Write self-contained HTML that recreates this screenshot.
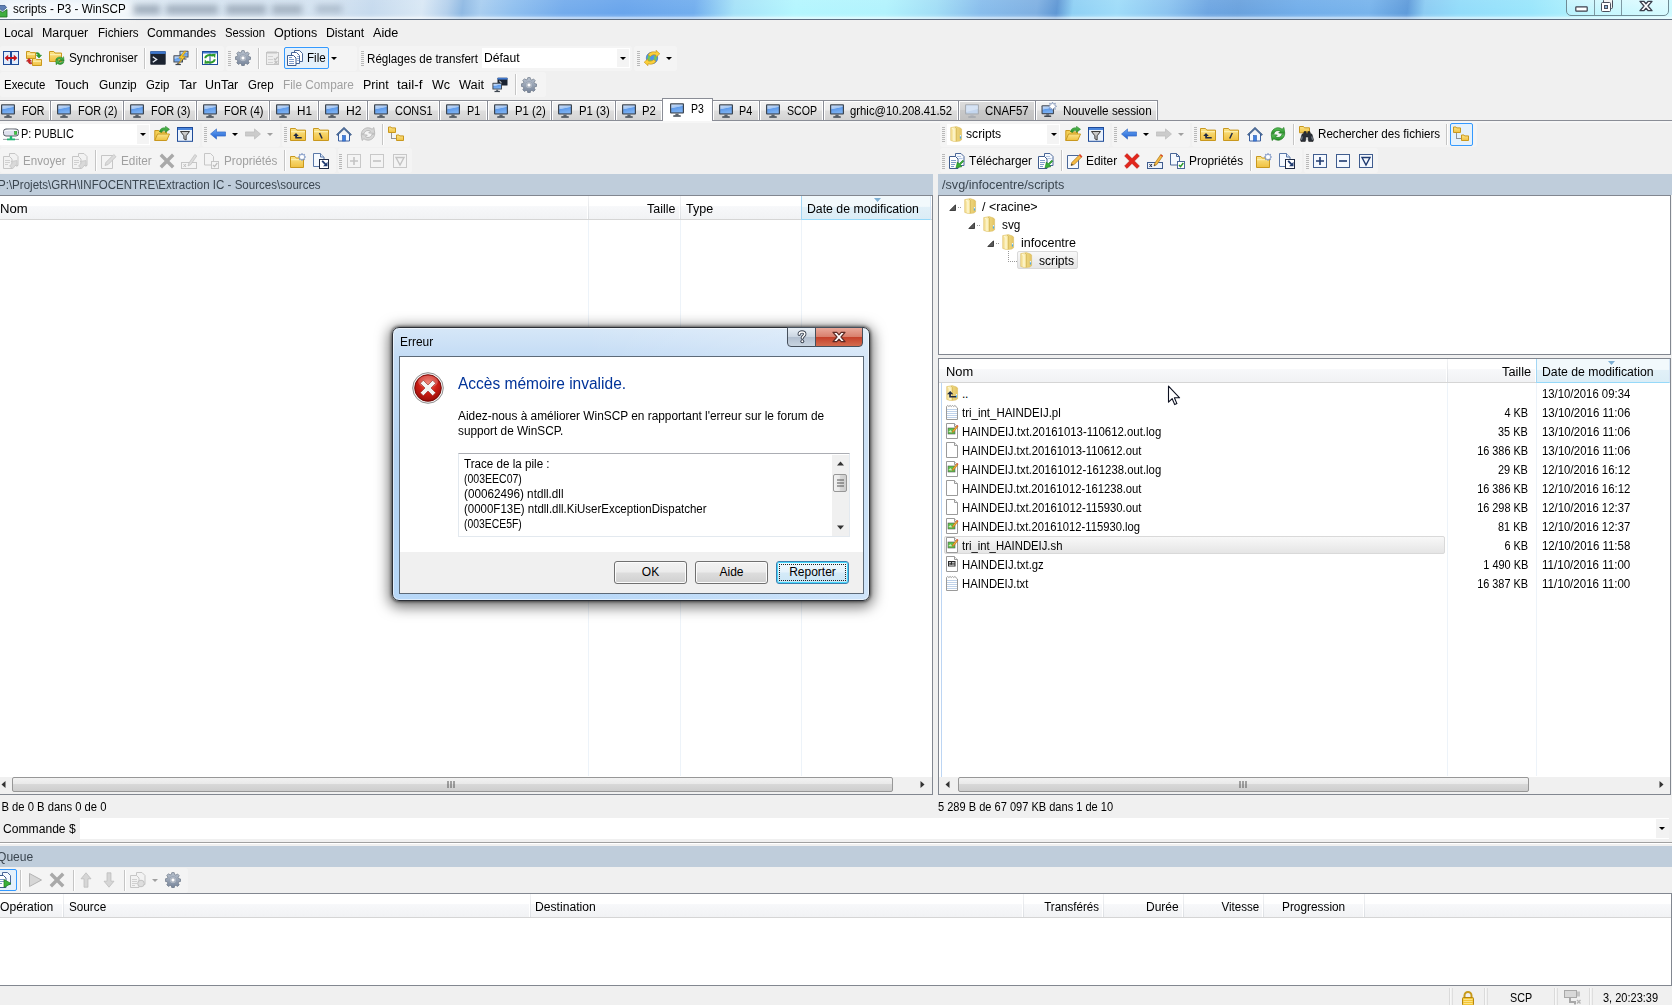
<!DOCTYPE html>
<html><head><meta charset="utf-8"><title>scripts - P3 - WinSCP</title>
<style>
*{box-sizing:border-box;margin:0;padding:0}
html,body{width:1672px;height:1005px;overflow:hidden;background:#f0f0f0}
body{font-family:"Liberation Sans",sans-serif;font-size:12px;color:#000;position:relative}
.a{position:absolute}
.t{position:absolute;white-space:pre;line-height:16px;height:16px;letter-spacing:-0.15px}
.g{color:#a0a0a0}
.ic{position:absolute;width:16px;height:16px}
.sep{position:absolute;width:1px;background:#c5c5c5;box-shadow:1px 0 0 #fff}
.grip{position:absolute;width:3px;height:15px;background:repeating-linear-gradient(to bottom,#b8b8b8 0,#b8b8b8 1px,transparent 1px,transparent 2px)}
.dd{position:absolute;width:0;height:0;border-left:3px solid transparent;border-right:3px solid transparent;border-top:3px solid #000}
.dd.g{border-top-color:#a0a0a0}
.tab{position:absolute;top:100px;height:20px;border:1px solid #8a8d96;border-bottom:none;background:linear-gradient(#f3f3f3,#ececec 48%,#dedede 52%,#d3d3d3);box-shadow:inset 1px 1px 0 #fff,inset -1px 0 0 #fff}
.tab.sel{top:98px;height:23px;background:#fff;border-color:#8a8d96;z-index:2;box-shadow:none}
.tab .t{top:2px}
.tab.sel .t{top:2px}
.hdr{position:absolute;background:#bfcddb;color:#3b4650}
.lh{position:absolute;height:24px;background:linear-gradient(#fff 0,#fff 42%,#f7f8fa 46%,#f1f2f4 100%);border-bottom:1px solid #d5d5d5}
.lh .t{top:5px}
.cs{position:absolute;top:0;width:1px;height:23px;background:linear-gradient(#f2f3f5,#dcdfe3);box-shadow:-1px 0 0 #fff}
.srt{position:absolute;top:0;height:24px;background:linear-gradient(#f2f9fc 0,#f2f9fc 45%,#e1f0f8 50%,#dbedf6 100%);border-left:1px solid #a3d6f4;border-right:1px solid #d6e5f5;border-bottom:1px solid #96d9f9}
.vl{position:absolute;width:1px;background:#edf3f9}
.sb{position:absolute;height:17px;background:#f0f0f0}
.thumb{position:absolute;top:0;height:15px;border:1px solid #979797;border-radius:2px;background:linear-gradient(#f2f2f2,#e9e9e9 45%,#d8d8d8 50%,#cdcdcd)}
.btn{position:absolute;height:23px;border:1px solid #707070;border-radius:3px;background:linear-gradient(#f2f2f2,#ebebeb 48%,#dddddd 52%,#cfcfcf);box-shadow:inset 0 0 0 1px #fcfcfc;text-align:center;line-height:20px;font-size:12px}
.fn{letter-spacing:-.45px}.fs{letter-spacing:-.5px}.fd{letter-spacing:-.3px}
.st{letter-spacing:-.4px}
</style></head>
<body>
<svg width="0" height="0" style="position:absolute"><defs>
<linearGradient id="scr" x1="0" y1="0" x2=".3" y2="1"><stop offset="0" stop-color="#cadcf6"/><stop offset=".42" stop-color="#a3c6f3"/><stop offset=".5" stop-color="#5f9bea"/><stop offset="1" stop-color="#7bb0f1"/></linearGradient>
<linearGradient id="fol" x1="0" y1="0" x2="0" y2="1"><stop offset="0" stop-color="#fbe58a"/><stop offset="1" stop-color="#f0c040"/></linearGradient>
<symbol id="mon" viewBox="0 0 16 16"><rect x="1" y="1.2" width="14" height="10.4" rx="1" fill="#3b444f"/><rect x="2.2" y="2.4" width="11.6" height="8" fill="url(#scr)"/><rect x="6.4" y="11.6" width="3.2" height="1.8" fill="#5a626c"/><rect x="4.2" y="13.2" width="7.6" height="1.5" rx=".5" fill="#3d454f"/></symbol>
<linearGradient id="gg" x1="0" y1="0" x2="0" y2="1"><stop offset="0" stop-color="#b9c2ce"/><stop offset="1" stop-color="#76849a"/></linearGradient>
<linearGradient id="bl" x1="0" y1="0" x2="0" y2="1"><stop offset="0" stop-color="#6aa7f5"/><stop offset="1" stop-color="#1f5fd0"/></linearGradient>
<linearGradient id="gr" x1="0" y1="0" x2="0" y2="1"><stop offset="0" stop-color="#62c662"/><stop offset="1" stop-color="#228b22"/></linearGradient>
<linearGradient id="w7f" x1="0" y1="0" x2="1" y2="0"><stop offset="0" stop-color="#f3dc8c"/><stop offset=".3" stop-color="#fbf0bb"/><stop offset=".55" stop-color="#eed77e"/><stop offset="1" stop-color="#e3c362"/></linearGradient>
<symbol id="cmp" viewBox="0 0 16 16"><rect x=".5" y="1.5" width="15" height="13" fill="#e3eefc" stroke="#1f4b99"/><rect x="7" y="1" width="2" height="14" fill="#1f4b99"/><path d="M1.6 8l3.6-3.2v2.2h5.6V4.8L14.4 8l-3.6 3.2V9H5.2v2.2z" fill="#c4161c"/></symbol>
<symbol id="fold" viewBox="0 0 16 16"><path d="M1.5 3.5h4.3l1.2 1.5h7.5v8.5h-13z" fill="url(#fol)" stroke="#c9981e"/><path d="M2 6.5h12" stroke="#fdf3b8"/></symbol>
<symbol id="syncf" viewBox="0 0 16 16"><path d="M.5 1.5h3.2l.9 1.1h4.9v5.9h-9z" fill="url(#fol)" stroke="#c9981e"/><path d="M6.5 8.5h3.2l.9 1.1h4.9v5.9h-9z" fill="url(#fol)" stroke="#c9981e"/><path d="M1 4.2h8M7 11.2h8" stroke="#fdf3b8"/><path d="M10.5 2.5c2.2 0 3.4 1 3.4 2.8h1.7L13 8 10.400 5.300h1.7c0-.9-.6-1.300-1.600-1.300z" fill="#2fa12f" stroke="#1c7a1c" stroke-width=".5"/><path d="M5.500 14c-2.200 0-3.400-1-3.400-2.800H.400L3 8.500l2.600 2.700H3.900c0 .9.600 1.300 1.600 1.300z" fill="#d32424" stroke="#9b1515" stroke-width=".5"/></symbol>
<symbol id="fsync" viewBox="0 0 16 16"><path d="M.5 1.500h4.300l1.200 1.500h6.500v8.500h-12z" fill="url(#fol)" stroke="#c9981e"/><path d="M1 4.700h11" stroke="#fdf3b8"/><path d="M6.800 9.800a4 3.600 0 0 1 6.500-1.900l1.300-1.200.5 4.300-4.500-.4 1.300-1.300a2.300 2.100 0 0 0-3.400.9z" fill="url(#gr)" stroke="#1c7a1c" stroke-width=".5"/><path d="M15 11.700a4 3.600 0 0 1-6.500 1.900l-1.300 1.200-.5-4.300 4.500.4-1.300 1.300a2.300 2.100 0 0 0 3.400-.9z" fill="url(#gr)" stroke="#1c7a1c" stroke-width=".5"/></symbol>
<symbol id="con" viewBox="0 0 16 16"><rect x=".3" y="1.300" width="15.400" height="13.400" rx=".8" fill="#1b2330"/><rect x=".3" y="1.300" width="15.400" height="2.600" fill="#3f78cf"/><path d="M2.800 6.800l3.800 2.700-3.800 2.700" fill="none" stroke="#e8edf5" stroke-width="1.400"/></symbol>
<symbol id="putty" viewBox="0 0 16 16"><rect x="6.500" y=".8" width="9" height="6.700" rx=".6" fill="#424a55"/><rect x="7.400" y="1.700" width="7.200" height="4.900" fill="url(#scr)"/><rect x="10" y="7.500" width="2" height="1.200" fill="#5a626c"/><rect x="8.500" y="8.500" width="5" height="1" fill="#3d454f"/><rect x=".4" y="5.300" width="9.600" height="7.200" rx=".6" fill="#424a55"/><rect x="1.400" y="6.300" width="7.600" height="5.200" fill="url(#scr)"/><rect x="4.200" y="12.500" width="2" height="1.500" fill="#5a626c"/><rect x="2.500" y="13.900" width="5.400" height="1.200" fill="#3d454f"/><path d="M11.200 1.200L5.800 8.200h2.700l-2.800 5.600 6.600-7.500H9.500l3.600-5.100z" fill="#f9cb2e" stroke="#b88a10" stroke-width=".6"/></symbol>
<symbol id="sbrowse" viewBox="0 0 16 16"><rect x=".5" y="1.500" width="15" height="13" fill="#fff" stroke="#1f4b99"/><rect x="1" y="2" width="14" height="1.500" fill="#3f78cf"/><rect x="7.500" y="3.500" width="1" height="11" fill="#1f4b99"/><path d="M3.300 8.300A4.700 3.500 0 0 1 11 5.800" fill="none" stroke="#2c9a2c" stroke-width="2"/><path d="M9.300 4l4.300-.3-.5 4.300z" fill="#2c9a2c"/><path d="M12.700 9.200A4.700 3.500 0 0 1 5 11.700" fill="none" stroke="#2c9a2c" stroke-width="2"/><path d="M6.700 13.500l-4.300.3.500-4.300z" fill="#2c9a2c"/></symbol>
<symbol id="gear" viewBox="0 0 16 16"><path d="M6.800.6h2.400l.4 1.900 1.300.55 1.650-1.100 1.700 1.700-1.100 1.650.55 1.300 1.900.4v2.400l-1.900.4-.55 1.300 1.100 1.650-1.700 1.700-1.650-1.100-1.300.55-.4 1.900H6.800l-.4-1.900-1.300-.55-1.650 1.100-1.700-1.700 1.100-1.650-.55-1.300-1.900-.4V6.800l1.900-.4.55-1.300-1.100-1.650 1.700-1.700 1.650 1.100 1.300-.55z" fill="url(#gg)" stroke="#5d6878" stroke-width=".6"/><circle cx="8" cy="8" r="3.300" fill="#c9d0da" stroke="#7b8798" stroke-width=".5"/><circle cx="8" cy="8" r="2" fill="#fff" stroke="#6d798a" stroke-width=".5"/></symbol>
<symbol id="qlistg" viewBox="0 0 16 16"><rect x="1.500" y="2.500" width="12" height="12" fill="#eeeeee" stroke="#c4c4c4"/><path d="M3 1v3M5 1v3M7 1v3M9 1v3M11 1v3" stroke="#c4c4c4"/><path d="M3 6.500h5M3 9.500h5M3 12.500h5" stroke="#d2d2d2"/><path d="M9 8.500l1.300 1.300 2.400-3" stroke="#bdbdbd" fill="none" stroke-width="1.200"/><path d="M9.500 10.800l3 3m0-3l-3 3" stroke="#bdbdbd" stroke-width="1.200"/></symbol>
<symbol id="docs3" viewBox="0 0 16 16"><path d="M7.500 .5h5l3 3v8h-8z" fill="#fff" stroke="#4a6798"/><path d="M4.500 2.500h5l3 3v8h-8z" fill="#fff" stroke="#4a6798"/><path d="M10 6.500h2M10 8.500h2M10 10.500h2" stroke="#9db2d6"/><path d="M.5 5.500h6l2.500 2.500v7.500h-8.500z" fill="#fff" stroke="#3f5c8e"/><path d="M2 9.500h5M2 11.500h5M2 13.500h5M2 7.500h3" stroke="#7f9bc9"/></symbol>
<symbol id="globe" viewBox="0 0 16 16"><circle cx="8" cy="8" r="5.700" fill="#4f95ea" stroke="#2a63b8" stroke-width=".6"/><path d="M4.200 5.500c1.300-1.300 3-1 3 .3s-1.800 1.200-1.400 2.600 1.800.9 1.600 2.400-2 1.500-2.900.2-1.200-4.300-.3-5.500zM10 6.200c1-.8 2.600-.2 2.800 1.300s-.7 3.200-1.800 2.800-.9-1.700-.7-2.500-.9-1-.3-1.600z" fill="#6fcb5a"/><path d="M4 4.800C5.800 1.900 9.400 1.200 12 2.300V.3l3.800 3.500L12 7.300V5.200C10.100 4.400 7.800 4.800 6.400 6.400z" fill="#fbd03a" stroke="#c48f14" stroke-width=".6" stroke-linejoin="round"/><path d="M12 11.200C10.200 14.100 6.600 14.800 4 13.700v2L.2 12.200 4 8.700v2.100c1.900.8 4.200.4 5.600-1.200z" fill="#fbd03a" stroke="#c48f14" stroke-width=".6" stroke-linejoin="round"/></symbol>
<symbol id="conmon" viewBox="0 0 16 16"><rect x="5.500" y=".8" width="10" height="7.700" rx=".6" fill="#1b2330"/><rect x="5.500" y=".8" width="10" height="1.800" fill="#3f78cf"/><path d="M7.300 4l2 1.500-2 1.500" stroke="#e8edf5" fill="none" stroke-width="1"/><rect x=".4" y="5.800" width="9.600" height="6.800" rx=".6" fill="#424a55"/><rect x="1.400" y="6.800" width="7.600" height="4.800" fill="url(#scr)"/><rect x="4.200" y="12.600" width="2" height="1.400" fill="#5a626c"/><rect x="2.500" y="13.900" width="5.400" height="1.200" fill="#3d454f"/></symbol>
<symbol id="drive" viewBox="0 0 16 16"><rect x=".5" y="3" width="15" height="7" rx="2.500" fill="#dfe1ee" stroke="#5b6068"/><path d="M1.500 5.200c1-1.400 12-1.400 13 0" stroke="#fff" fill="none"/><rect x="11.500" y="5.500" width="2.300" height="2.800" fill="#3ed13e" stroke="#208520" stroke-width=".5"/><rect x="6.800" y="10" width="2.400" height="3" fill="#22b573"/><rect x="4" y="12.500" width="8" height="1.800" fill="#22b573"/><path d="M0 13.400h4M12 13.400h4" stroke="#9aa0a8"/></symbol>
<symbol id="fopen" viewBox="0 0 16 16"><path d="M.8 14.500V4.500h4l1.200 1.500h6.500v2" fill="#f3cf55" stroke="#c9981e"/><path d="M.8 14.500l2.700-6.500h12l-2.800 6.500z" fill="url(#fol)" stroke="#c9981e"/><path d="M5.500 5.500c.5-3 3.500-4.300 6-3.500V.3l4 3-4 3.200V4.800c-1.800-.5-3.300 0-4 1.700z" fill="url(#gr)" stroke="#1c7a1c" stroke-width=".5"/></symbol>
<symbol id="filt" viewBox="0 0 16 16"><rect x=".5" y="1.500" width="15" height="13.800" fill="#eaf2fc" stroke="#1f4b99"/><rect x="1" y="2" width="14" height="2" fill="#4b86dc"/><path d="M3.500 5.500h9l-3.400 4.300v4.200l-2.200-1.200v-3z" fill="#c9c9c9" stroke="#3a3a3a" stroke-width="1"/></symbol>
<symbol id="back" viewBox="0 0 16 16"><path d="M.5 8L6.500 2.900v3h9v4.200h-9v3z" fill="url(#bl)" stroke="#2a5fc0" stroke-width=".6"/></symbol>
<symbol id="fwdg" viewBox="0 0 16 16"><path d="M15.500 8L9.500 2.900v3h-9v4.200h9v3z" fill="#cbcbcb" stroke="#b6b6b6" stroke-width=".6"/></symbol>
<symbol id="fup" viewBox="0 0 16 16"><path d="M.5 2.500h5l1.300 1.600h8.700v10.400h-15z" fill="url(#fol)" stroke="#c9981e"/><path d="M1 5.700h14" stroke="#fdf3b8"/><path d="M6 7l-2.800 3h2v2.500h6.500V11H7v-1h1.800z" fill="#1f2a44"/></symbol>
<symbol id="froot" viewBox="0 0 16 16"><path d="M.5 2.500h5l1.300 1.600h8.700v10.400h-15z" fill="url(#fol)" stroke="#c9981e"/><path d="M1 5.700h14" stroke="#fdf3b8"/><path d="M6.500 7l2.600 5.500" stroke="#1f2a44" stroke-width="1.500"/></symbol>
<symbol id="froot2" viewBox="0 0 16 16"><path d="M.5 2.500h5l1.300 1.600h8.700v10.400h-15z" fill="url(#fol)" stroke="#c9981e"/><path d="M1 5.700h14" stroke="#fdf3b8"/><path d="M9.300 7l-2.600 5.500" stroke="#1f2a44" stroke-width="1.500"/></symbol>
<symbol id="home" viewBox="0 0 16 16"><path d="M2.500 8v7h11V8" fill="#f4f8fe" stroke="#3a5f9f"/><path d="M.4 8.600L8 1.200l7.600 7.400-1 1L8 3.300 1.400 9.600z" fill="#4d6f9f" stroke="#2f4a75" stroke-width=".5"/><rect x="6.500" y="9.500" width="3" height="5.500" fill="#3f7fe0" stroke="#2a5db0" stroke-width=".6"/></symbol>
<symbol id="refr" viewBox="0 0 16 16"><path d="M1.300 7.800C1.800 4 4.800 1.800 8 1.800c1.600 0 3 .5 4.100 1.400L13.900 1.500l.9 6-6.100-.6 1.700-1.700C9.700 4.700 8.900 4.500 8 4.500c-2 0-3.500 1.300-4 3.300z" fill="url(#gr)" stroke="#1c7a1c" stroke-width=".7" stroke-linejoin="round"/><path d="M14.700 8.200C14.200 12 11.200 14.200 8 14.200c-1.600 0-3-.5-4.100-1.400L2.100 14.500l-.9-6 6.100.6-1.700 1.700c.7.500 1.500.7 2.400.7 2 0 3.500-1.300 4-3.300z" fill="url(#gr)" stroke="#1c7a1c" stroke-width=".7" stroke-linejoin="round"/></symbol>
<symbol id="refrg" viewBox="0 0 16 16"><path d="M1.300 7.800C1.800 4 4.800 1.800 8 1.800c1.600 0 3 .5 4.100 1.400L13.900 1.500l.9 6-6.100-.6 1.700-1.700C9.700 4.700 8.900 4.500 8 4.500c-2 0-3.500 1.300-4 3.300z" fill="#d6d6d6" stroke="#aaaaaa" stroke-width=".7" stroke-linejoin="round"/><path d="M14.700 8.200C14.200 12 11.200 14.200 8 14.200c-1.600 0-3-.5-4.100-1.400L2.100 14.500l-.9-6 6.100.6-1.700 1.700c.7.500 1.500.7 2.400.7 2 0 3.500-1.300 4-3.300z" fill="#d6d6d6" stroke="#aaaaaa" stroke-width=".7" stroke-linejoin="round"/></symbol>
<symbol id="tree" viewBox="0 0 16 16"><path d="M.5 1h2.500l.7.900h3.800v4.600h-7z" fill="url(#fol)" stroke="#c9981e"/><path d="M8.500 9h2.500l.7.900h3.800v4.600h-7z" fill="url(#fol)" stroke="#c9981e"/><path d="M3.500 7.500v5h4.500" stroke="#333" fill="none" stroke-dasharray="1 1"/></symbol>
<symbol id="uplg" viewBox="0 0 16 16"><path d="M6.500 .5h5.500l3 3v9h-8.500z" fill="#f2f2f2" stroke="#c6c6c6"/><path d="M.5 3.500h6l2.500 2.500v9.500h-8.500z" fill="#f2f2f2" stroke="#c6c6c6"/><path d="M2 7.500h5M2 9.500h5M2 11.500h3" stroke="#d0d0d0"/><path d="M9 15.500v-4.500h-2l4-4.500 4 4.500h-2v4.500z" fill="#d9d9d9" stroke="#c0c0c0" stroke-width=".6" transform="rotate(40 11 11)"/></symbol>
<symbol id="editg" viewBox="0 0 16 16"><path d="M.5 2.500h11v13h-11z" fill="#f4f4f4" stroke="#c6c6c6"/><path d="M4 12.500l1-3.200 7.800-7.800 2.200 2.200-7.800 7.800z" fill="#dcdcdc" stroke="#bdbdbd" stroke-width=".7"/></symbol>
<symbol id="xg" viewBox="0 0 16 16"><path d="M3 .6L8 5.600 13 .6 15.400 3 10.400 8l5 5-2.400 2.400-5-5-5 5L.6 13l5-5-5-5z" fill="#a9a9a9"/></symbol>
<symbol id="xr" viewBox="0 0 16 16"><path d="M3 .6L8 5.600 13 .6 15.400 3 10.400 8l5 5-2.400 2.400-5-5-5 5L.6 13l5-5-5-5z" fill="#e3261c" stroke="#b4160e" stroke-width=".5"/></symbol>
<symbol id="reng" viewBox="0 0 16 16"><rect x=".5" y="9.500" width="15" height="6" fill="#f4f4f4" stroke="#c6c6c6"/><path d="M2.500 11l2.500 3m0-3l-2.500 3" stroke="#c0c0c0"/><path d="M7 13l.8-2.800 6-8.700 2 1.400-6 8.700z" fill="#dcdcdc" stroke="#bdbdbd" stroke-width=".7"/></symbol>
<symbol id="ren" viewBox="0 0 16 16"><rect x=".5" y="9.500" width="15" height="6" fill="#eef4fc" stroke="#3f5c8e"/><path d="M2.500 11l2.500 3m0-3l-2.500 3" stroke="#1f2a44"/><path d="M7 13l.8-2.800 6-8.700 2 1.400-6 8.700z" fill="#f4b942" stroke="#a9741a" stroke-width=".7"/><path d="M13.200 2.300l2 1.400.6-.9-2-1.400z" fill="#e0342a"/><path d="M7 13l.5-1.800 1.100.8z" fill="#333"/></symbol>
<symbol id="edit" viewBox="0 0 16 16"><path d="M.5 2.500h11v13h-11z" fill="#f5f9fe" stroke="#4a6798"/><path d="M4 12.500l1-3.200 7.800-7.800 2.200 2.200-7.800 7.800z" fill="#f4b942" stroke="#a9741a" stroke-width=".7"/><path d="M12 2.300l2.200 2.200 1-1-2.200-2.200z" fill="#e0342a"/><path d="M4 12.500l.6-2 1.400 1.400z" fill="#333"/></symbol>
<symbol id="propg" viewBox="0 0 16 16"><path d="M.5 .5h6l3 3v8.500h-9z" fill="#f4f4f4" stroke="#c6c6c6"/><rect x="7.500" y="8.500" width="7" height="7" fill="#f4f4f4" stroke="#c6c6c6"/><path d="M9 12l1.500 1.600 2.800-3.600" stroke="#bdbdbd" fill="none" stroke-width="1.300"/></symbol>
<symbol id="prop" viewBox="0 0 16 16"><path d="M.5 .5h6l3 3v8.500h-9z" fill="#f5f9fe" stroke="#4a6798"/><path d="M6.500 .5v3h3" fill="none" stroke="#4a6798"/><rect x="7.500" y="8.500" width="7" height="7" fill="#fff" stroke="#4a6798"/><path d="M9 12l1.500 1.600 2.800-3.600" stroke="#2b9a2b" fill="none" stroke-width="1.500"/></symbol>
<symbol id="dl" viewBox="0 0 16 16"><path d="M6.500 .5h5.500l3 3v9h-8.500z" fill="#f5f9fe" stroke="#4a6798"/><path d="M8 3.500h4M9.500 5.500h4" stroke="#b4c6e2"/><path d="M.5 3.500h6l2.500 2.500v9.500h-8.500z" fill="#fff" stroke="#3f5c8e"/><path d="M2 7.500h5M2 9.500h5M2 11.500h4M2 13.500h3" stroke="#7f9bc9"/><path d="M14.800 8.200l-3.600 3.600 1.800 1.800-6 1.400 1.400-6 1.800 1.800 3.600-3.600z" fill="#38b038" stroke="#1c7a1c" stroke-width=".6"/></symbol>
<symbol id="fnew" viewBox="0 0 16 16"><path d="M.5 3.500h4.500l1.200 1.500h7.300v9.500h-13z" fill="url(#fol)" stroke="#c9981e"/><path d="M1 6.700h12" stroke="#fdf3b8"/><path d="M12 .3l.8 1.700 1.800-.7-.6 1.800 1.700.9-1.700.9.600 1.800-1.800-.7-.8 1.700-.8-1.700-1.800.7.600-1.800-1.700-.9 1.700-.9-.6-1.800 1.800.7z" fill="#fff" stroke="#5d7db8" stroke-width=".7"/></symbol>
<symbol id="shcut" viewBox="0 0 16 16"><path d="M.5 .5h7l3.500 3.500v9.500h-10.500z" fill="#f5f9fe" stroke="#5a78a8"/><path d="M7.500 .5v3.500h3.500" fill="#dde8f8" stroke="#5a78a8"/><rect x="6.500" y="6.500" width="9" height="9" fill="#fff" stroke="#1f2a44"/><path d="M8.500 8.500l3.200 3.200-1.700 1.500h4.500V8.700l-1.500 1.700-3.200-3.200z" fill="#1f3a70"/></symbol>
<symbol id="plus" viewBox="0 0 14 14"><rect x=".5" y=".5" width="13" height="13" fill="#f4f8fe" stroke="#3f5c8e"/><path d="M3 7h8M7 3v8" stroke="#1f3a70" stroke-width="1.600"/></symbol>
<symbol id="minus" viewBox="0 0 14 14"><rect x=".5" y=".5" width="13" height="13" fill="#f4f8fe" stroke="#3f5c8e"/><path d="M3 7h8" stroke="#1f3a70" stroke-width="1.600"/></symbol>
<symbol id="fbox" viewBox="0 0 14 14"><rect x=".5" y=".5" width="13" height="13" fill="#f4f8fe" stroke="#3f5c8e"/><path d="M3 3.500h8l-4 7.500z" fill="none" stroke="#1f3a70" stroke-width="1.400"/></symbol>
<symbol id="plusg" viewBox="0 0 14 14"><rect x=".5" y=".5" width="13" height="13" fill="#f4f4f4" stroke="#c8c8c8"/><path d="M3 7h8M7 3v8" stroke="#c4c4c4" stroke-width="1.600"/></symbol>
<symbol id="minusg" viewBox="0 0 14 14"><rect x=".5" y=".5" width="13" height="13" fill="#f4f4f4" stroke="#c8c8c8"/><path d="M3 7h8" stroke="#c4c4c4" stroke-width="1.600"/></symbol>
<symbol id="fboxg" viewBox="0 0 14 14"><rect x=".5" y=".5" width="13" height="13" fill="#f4f4f4" stroke="#c8c8c8"/><path d="M3 3.500h8l-4 7.500z" fill="none" stroke="#c4c4c4" stroke-width="1.400"/></symbol>
<symbol id="bino" viewBox="0 0 16 16"><path d="M.5 .5h4l1 1.300h5v5h-10z" fill="url(#fol)" stroke="#c9981e"/><path d="M5.200 5.500h2v2h1.600v-2h2l.7 2 1.500.8 1.500 5.500-.5 1.700H9.800l-.6-1.700V11H6.800v2.800l-.6 1.700H2l-.5-1.700L3 8.300l1.500-.8z" fill="#2a2f38" stroke="#111" stroke-width=".5"/><path d="M3.200 10.500l-.6 3.300M12.800 10.500l.6 3.300" stroke="#8a93a0"/></symbol>
<symbol id="w7" viewBox="0 0 16 16"><path d="M2.700 1.600l5.600-1 4.300 1.400 1 1.200v10.600l-1.800 1.300-5.300.6-3.800-1.300z" fill="url(#w7f)" stroke="#d9b95a" stroke-width=".5"/><path d="M7 1l1.600 1.400v12.800" stroke="#c9a94a" fill="none" stroke-width=".6"/><path d="M4 2.300l2 1.200v11.200" stroke="#fdf6d0" fill="none" stroke-width="1.200"/><rect x="11.900" y="9" width="1.200" height="3.500" fill="#4aa8e8"/><rect x="11.900" y="9" width="1.200" height="1.400" fill="#e8f4fc"/></symbol>
<symbol id="w7up" viewBox="0 0 16 16"><use href="#w7"/><path d="M6.200 6L3 9.300h2.200v3.200H12V11H6.900V9.300H9.300z" fill="#1f2a44"/></symbol>
<symbol id="doc" viewBox="0 0 16 16"><path d="M2.500 2.500l1.200-1 1.200 1 1.200-1 1.200 1 1.200-1 1.200 1 1.200-1 2.600 2.500v11.500h-11z" fill="#fff" stroke="#9a9a9a"/><path d="M3 5.500h10M3 7.500h10M3 9.500h10M3 11.500h10M3 13.500h10" stroke="#bfd2ea"/></symbol>
<symbol id="blank" viewBox="0 0 16 16"><path d="M2.500 .5h8l3 3v12h-11z" fill="#fff" stroke="#9a9a9a"/><path d="M10.500 .5v3h3" fill="#f2f2f2" stroke="#9a9a9a"/></symbol>
<symbol id="scr2" viewBox="0 0 16 16"><path d="M2.500 .5h8l3 3v12h-11z" fill="#fff" stroke="#9a9a9a"/><path d="M10.500 .5v3h3" fill="#f2f2f2" stroke="#9a9a9a"/><rect x="4" y="5" width="7" height="6" fill="#5ec44a" stroke="#555" stroke-width=".6"/><path d="M4.300 9l2.200-2 2 2.500" fill="#cde9c0"/><path d="M8 9.500l.6-1.800 4-5 1.300 1-4 5z" fill="#f4a932" stroke="#a9641a" stroke-width=".5"/><path d="M12.600 2.700l1.300 1 .5-.7-1.300-1z" fill="#e0342a"/></symbol>
<symbol id="gz" viewBox="0 0 16 16"><path d="M2.500 .5h8l3 3v12h-11z" fill="#fff" stroke="#9a9a9a"/><path d="M10.500 .5v3h3" fill="#f2f2f2" stroke="#9a9a9a"/><rect x="4" y="5" width="7.500" height="5.500" fill="#2a2a2a"/><path d="M5 6.500h2M5 8h1.500M8 6.500h2.500M8 8h2.500M5 9.300h5.500" stroke="#e8e8e8" stroke-width=".8"/></symbol>
<symbol id="lock" viewBox="0 0 16 16"><path d="M4.500 8V5.500a3.500 3.500 0 0 1 7 0V8" fill="none" stroke="#c79a1c" stroke-width="2"/><rect x="2.500" y="7.500" width="11" height="8" rx="1" fill="#f4c534" stroke="#b5860f"/><path d="M3.500 9.500h9M3.500 11.500h9M3.500 13.500h9" stroke="#fbe38a"/></symbol>
<symbol id="stico" viewBox="0 0 18 16"><rect x=".5" y="1.500" width="12" height="7" fill="#d8d8d8" stroke="#a8a8a8"/><rect x="13" y="2.500" width="3" height="5" fill="#c4c4c4"/><path d="M6 9v4h5v2.500" stroke="#a8a8a8" fill="none" stroke-width="2"/><path d="M13 11l3.500 3.500m0-3.500L13 14.500" stroke="#b4b4b4" stroke-width="1.300"/></symbol>
<symbol id="qgo" viewBox="0 0 16 16"><path d="M5.500 .5h5l3 3v9h-8z" fill="#f5f9fe" stroke="#4a6798"/><path d="M.5 3.500h6l2.500 2.500v9.500h-8.500z" fill="#fff" stroke="#3f5c8e"/><path d="M2 7.500h5M2 9.500h5M2 11.500h3" stroke="#7f9bc9"/><path d="M7 7.500v8l7-4z" fill="#38b038" stroke="#1c7a1c" stroke-width=".7"/></symbol>
<symbol id="playg" viewBox="0 0 16 16"><path d="M2.500 1.500v13l12-6.500z" fill="#d6d6d6" stroke="#b4b4b4"/></symbol>
<symbol id="upg" viewBox="0 0 16 16"><path d="M8 .8l5 6H10v8.400H6V6.800H3z" fill="#d6d6d6" stroke="#b9b9b9" stroke-width=".7"/></symbol>
<symbol id="downg" viewBox="0 0 16 16"><path d="M8 15.200l5-6H10V.8H6v8.400H3z" fill="#d6d6d6" stroke="#b9b9b9" stroke-width=".7"/></symbol>
<symbol id="docsg" viewBox="0 0 16 16"><path d="M6.500 .5h5.500l3 3v9h-8.500z" fill="#f2f2f2" stroke="#c6c6c6"/><path d="M.5 3.500h6l2.500 2.500v9.500h-8.500z" fill="#f2f2f2" stroke="#c6c6c6"/><path d="M2 7.500h5M2 9.500h5M2 11.500h5M2 13.500h3" stroke="#d0d0d0"/><circle cx="11" cy="11.500" r="3.300" fill="#dedede" stroke="#c2c2c2"/></symbol>
<radialGradient id="errg" cx=".5" cy=".35" r=".7"><stop offset="0" stop-color="#ee6a58"/><stop offset=".5" stop-color="#cc1d14"/><stop offset="1" stop-color="#8f0c08"/></radialGradient>
<symbol id="err" viewBox="0 0 32 32"><circle cx="16" cy="16" r="15.300" fill="#f2f2f2" stroke="#858585" stroke-width=".9"/><circle cx="16" cy="16" r="13.300" fill="url(#errg)" stroke="#6f0806" stroke-width=".9"/><ellipse cx="16" cy="9.500" rx="10" ry="6" fill="#fff" opacity=".22"/><path d="M8.300 11.300l3-3 4.700 4.700 4.700-4.700 3 3-4.700 4.700 4.700 4.700-3 3-4.700-4.700-4.700 4.700-3-3 4.700-4.700z" fill="#f4f4f4" stroke="#8e241d" stroke-width=".6"/></symbol>
<symbol id="mong" viewBox="0 0 16 16"><rect x="1" y="1.200" width="14" height="10.400" rx="1" fill="#a9adb3"/><rect x="2.200" y="2.400" width="11.600" height="8" fill="#c4d6ee"/><path d="M2.200 2.400h11.600v3.500l-11.600 3z" fill="#d6e3f4"/><rect x="6.400" y="11.600" width="3.200" height="1.800" fill="#b4b8be"/><rect x="4.200" y="13.200" width="7.600" height="1.500" rx=".5" fill="#a4a8ae"/></symbol>
<symbol id="monnew" viewBox="0 0 16 16"><rect x=".5" y="3.200" width="12.500" height="9" rx="1" fill="#424a55"/><rect x="1.600" y="4.300" width="10.300" height="6.800" fill="url(#scr)"/><rect x="5.200" y="12.200" width="3" height="1.500" fill="#5a626c"/><rect x="3.200" y="13.500" width="7" height="1.500" rx=".5" fill="#3d454f"/><path d="M11.500 .2l.9 1.900 2-.8-.7 2 1.900 1-1.900 1 .7 2-2-.8-.9 1.900-.9-1.900-2 .8.700-2-1.900-1 1.900-1-.7-2 2 .8z" fill="#fff" stroke="#6d84ad" stroke-width=".7"/></symbol>
<!--SYMBOLS-->
</defs></svg>
<div class="a" id="titlebar" style="left:0;top:0;width:1672px;height:19px;background:linear-gradient(97deg,#e6eff8 0px,#e4eef7 120px,#d9e6f2 180px,#d3e2f0 330px,#c6daee 370px,#d9e8f5 420px,#b4d0ec 445px,#8fb9e3 460px,#a9cef0 478px,#90c0ef 510px,#74acec 560px,#69a5ec 620px,#72aeee 690px,#a6e2f8 730px,#b4f6fe 790px,#b2f3fd 880px,#a2def6 930px,#88bdec 975px,#7fb0e2 1030px,#5f97d4 1050px,#8fd0f4 1066px,#9fdcf9 1110px,#8cc4f0 1160px,#6ea6e2 1200px,#6aa2de 1230px,#72aeea 1290px,#78b4ec 1360px,#5f9bda 1398px,#8cccf3 1415px,#92dcfa 1450px,#9ae6fc 1520px,#b4f3fd 1580px,#d2fbff 1672px)"></div>
<div class="a" style="left:0;top:0;width:1672px;height:19px;background:linear-gradient(rgba(255,255,255,.06),rgba(255,255,255,0) 70%,rgba(255,255,255,.12) 84%,rgba(255,255,255,.5) 92%,rgba(255,255,255,.55))"></div>
<div class="a" style="left:132px;top:5px;width:28px;height:9px;background:#8a98a8;filter:blur(3px);opacity:.75"></div>
<div class="a" style="left:166px;top:5px;width:52px;height:9px;background:#8a98a8;filter:blur(3px);opacity:.7"></div>
<div class="a" style="left:226px;top:5px;width:40px;height:9px;background:#8a98a8;filter:blur(3px);opacity:.7"></div>
<div class="a" style="left:272px;top:5px;width:30px;height:9px;background:#8a98a8;filter:blur(3px);opacity:.65"></div>
<div class="a" style="left:316px;top:5px;width:26px;height:8px;background:#94a4b6;filter:blur(3px);opacity:.6"></div>
<div class="a" style="left:6px;top:2px;width:126px;height:15px;background:#fff;filter:blur(5px);opacity:.75"></div>
<svg class="a" style="left:-5px;top:3px" width="16" height="16" viewBox="0 0 16 16"><path d="M3 6.500l4.500 3 4.500-3v7.500h-9z" fill="#3fae3f" stroke="#1f6f1f" stroke-width=".8"/><path d="M5 2.500h5l1.500 2-4 3.500-4-3.500z" fill="#5d7fb5" stroke="#2a4a80" stroke-width=".7"/></svg>
<div class="a" style="left:0;top:19px;width:1672px;height:1px;background:#5d6c80"></div>
<div class="t" style="left:12.9px;top:1px;font-size:12px;letter-spacing:0;transform:scaleX(0.9711);transform-origin:0 0">scripts - P3 - WinSCP</div>
<div class="a" style="left:1566px;top:-4px;width:103px;height:20px;border:1px solid #6f8b95;border-radius:0 0 5px 5px;background:linear-gradient(rgba(255,255,255,.45),rgba(255,255,255,.15))"></div>
<div class="a" style="left:1594px;top:0;width:1px;height:15px;background:#7d99a3"></div>
<div class="a" style="left:1621px;top:0;width:1px;height:15px;background:#7d99a3"></div>

<!--BANDS-->
<div class="a" style="left:0px;top:46px;width:224px;height:25px;background:#f4f4f4;border-radius:3px"></div>
<div class="a" style="left:226px;top:46px;width:131px;height:25px;background:#f4f4f4;border-radius:3px"></div>
<div class="a" style="left:359px;top:46px;width:273px;height:25px;background:#f4f4f4;border-radius:3px"></div>
<div class="a" style="left:634px;top:46px;width:43px;height:25px;background:#f4f4f4;border-radius:3px"></div>
<div class="a" style="left:0px;top:72px;width:546px;height:25px;background:#f4f4f4;border-radius:3px"></div>
<div class="a" style="left:0px;top:122px;width:200px;height:25px;background:#f4f4f4;border-radius:3px"></div>
<div class="a" style="left:202px;top:122px;width:78px;height:25px;background:#f4f4f4;border-radius:3px"></div>
<div class="a" style="left:282px;top:122px;width:128px;height:25px;background:#f4f4f4;border-radius:3px"></div>
<div class="a" style="left:0px;top:148px;width:336px;height:25px;background:#f4f4f4;border-radius:3px"></div>
<div class="a" style="left:338px;top:148px;width:74px;height:25px;background:#f4f4f4;border-radius:3px"></div>
<div class="a" style="left:940px;top:122px;width:170px;height:25px;background:#f4f4f4;border-radius:3px"></div>
<div class="a" style="left:1112px;top:122px;width:78px;height:25px;background:#f4f4f4;border-radius:3px"></div>
<div class="a" style="left:1192px;top:122px;width:285px;height:25px;background:#f4f4f4;border-radius:3px"></div>
<div class="a" style="left:940px;top:148px;width:362px;height:25px;background:#f4f4f4;border-radius:3px"></div>
<div class="a" style="left:1304px;top:148px;width:74px;height:25px;background:#f4f4f4;border-radius:3px"></div>
<div class="a" style="left:0px;top:868px;width:188px;height:25px;background:#f4f4f4;border-radius:3px"></div>
<!--WC-->
<svg class="a" style="left:1575px;top:5px" width="13" height="8" viewBox="0 0 13 8"><rect x=".8" y="1.800" width="11.400" height="4.400" rx=".6" fill="#fff" stroke="#3b3f4c" stroke-width="1.200"/></svg>
<svg class="a" style="left:1600px;top:-1px" width="14" height="14" viewBox="0 0 14 14"><rect x="3.500" y=".5" width="9" height="9" rx="1" fill="#f4f4f4" stroke="#4a4f5c"/><rect x="1.500" y="3.500" width="9" height="9" rx="1" fill="#fff" stroke="#4a4f5c"/><rect x="4.500" y="6.500" width="3" height="3" fill="#8fb4d8" stroke="#4a4f5c"/></svg>
<svg class="a" style="left:1639px;top:0" width="14" height="12" viewBox="0 0 14 12"><path d="M1 1.300h3.800L7 3.800l2.200-2.500H13L9 6l4 4.700H9.200L7 8.200l-2.200 2.500H1L5 6z" fill="#fff" stroke="#3b3f4c" stroke-width="1.3" stroke-linejoin="round"/></svg>
<div class="t" style="left:4.4px;top:25px;letter-spacing:0;transform:scaleX(1.0186);transform-origin:0 0">Local</div>
<div class="t" style="left:42.4px;top:25px;letter-spacing:0;transform:scaleX(1.0348);transform-origin:0 0">Marquer</div>
<div class="t" style="left:97.9px;top:25px;letter-spacing:0;transform:scaleX(0.9678);transform-origin:0 0">Fichiers</div>
<div class="t" style="left:147.4px;top:25px;letter-spacing:0;transform:scaleX(1.0175);transform-origin:0 0">Commandes</div>
<div class="t" style="left:225.4px;top:25px;letter-spacing:0;transform:scaleX(0.9397);transform-origin:0 0">Session</div>
<div class="t" style="left:274.4px;top:25px;letter-spacing:0;transform:scaleX(1.0458);transform-origin:0 0">Options</div>
<div class="t" style="left:326.4px;top:25px;letter-spacing:0;transform:scaleX(1.0232);transform-origin:0 0">Distant</div>
<div class="t" style="left:373.4px;top:25px;letter-spacing:0;transform:scaleX(1.0512);transform-origin:0 0">Aide</div>

<div class="t" style="left:68.5px;top:50px;letter-spacing:0;transform:scaleX(0.9821);transform-origin:0 0">Synchroniser</div>
<div class="sep" style="left:144px;top:48px;height:21px"></div>
<div class="sep" style="left:196px;top:48px;height:21px"></div>
<div class="grip" style="left:228px;top:51px"></div>
<div class="sep" style="left:258px;top:48px;height:21px"></div>
<div class="a" style="left:284px;top:47px;width:45px;height:22px;border:1px solid #3399ff;border-radius:2px;background:#e5f1fb"></div>
<div class="t" style="left:306.8px;top:50px;letter-spacing:0;transform:scaleX(0.97);transform-origin:0 0">File</div>
<div class="dd" style="left:331px;top:57px"></div>
<div class="grip" style="left:361px;top:51px"></div>
<div class="t" style="left:366.6px;top:51px;letter-spacing:0;transform:scaleX(0.9671);transform-origin:0 0">Réglages de transfert</div>
<div class="a" style="left:482px;top:48px;width:148px;height:20px;background:#fff"></div>
<div class="a" style="left:617px;top:49px;width:12px;height:18px;background:#f4f4f4"></div>
<div class="t" style="left:483.9px;top:50px;letter-spacing:0;transform:scaleX(1.01);transform-origin:0 0">Défaut</div>
<div class="dd" style="left:620px;top:57px"></div>
<div class="grip" style="left:637px;top:51px"></div>
<div class="dd" style="left:666px;top:57px"></div>
<div class="t" style="left:4.4px;top:77px;letter-spacing:0;transform:scaleX(0.9535);transform-origin:0 0">Execute</div>
<div class="t" style="left:55.2px;top:77px;letter-spacing:0;transform:scaleX(1.0574);transform-origin:0 0">Touch</div>
<div class="t" style="left:98.6px;top:77px;letter-spacing:0;transform:scaleX(0.991);transform-origin:0 0">Gunzip</div>
<div class="t" style="left:145.9px;top:77px;letter-spacing:0;transform:scaleX(0.9494);transform-origin:0 0">Gzip</div>
<div class="t" style="left:179.0px;top:77px;letter-spacing:0;transform:scaleX(1.06);transform-origin:0 0">Tar</div>
<div class="t" style="left:205.4px;top:77px;letter-spacing:0;transform:scaleX(1.0384);transform-origin:0 0">UnTar</div>
<div class="t" style="left:247.6px;top:77px;letter-spacing:0;transform:scaleX(0.9573);transform-origin:0 0">Grep</div>
<div class="t g" style="left:282.8px;top:77px;letter-spacing:0;transform:scaleX(0.9826);transform-origin:0 0">File Compare</div>
<div class="t" style="left:362.8px;top:77px;letter-spacing:0;transform:scaleX(1.0389);transform-origin:0 0">Print</div>
<div class="t" style="left:397.1px;top:77px;letter-spacing:0;transform:scaleX(1.12);transform-origin:0 0">tail-f</div>
<div class="t" style="left:432.4px;top:77px;letter-spacing:0;transform:scaleX(1.0417);transform-origin:0 0">Wc</div>
<div class="t" style="left:459.4px;top:77px;letter-spacing:0;transform:scaleX(1.0643);transform-origin:0 0">Wait</div>
<div class="sep" style="left:515px;top:74px;height:21px"></div>

<div class="a" style="left:0;top:120px;width:1672px;height:1px;background:#8a8d96"></div>
<div class="a" style="left:0;top:121px;width:1672px;height:2px;background:#f6f6f6"></div>
<div class="tab" style="left:-6px;width:57px"><svg class="ic" style="left:5px;top:2px"><use href="#mon"/></svg><div class="t" style="left:27.1px;letter-spacing:0;transform:scaleX(0.8864);transform-origin:0 0">FOR</div></div>
<div class="tab" style="left:50px;width:74px"><svg class="ic" style="left:5px;top:2px"><use href="#mon"/></svg><div class="t" style="left:26.9px;letter-spacing:0;transform:scaleX(0.9112);transform-origin:0 0">FOR (2)</div></div>
<div class="tab" style="left:123px;width:74px"><svg class="ic" style="left:5px;top:2px"><use href="#mon"/></svg><div class="t" style="left:26.9px;letter-spacing:0;transform:scaleX(0.9112);transform-origin:0 0">FOR (3)</div></div>
<div class="tab" style="left:196px;width:74px"><svg class="ic" style="left:5px;top:2px"><use href="#mon"/></svg><div class="t" style="left:26.9px;letter-spacing:0;transform:scaleX(0.9112);transform-origin:0 0">FOR (4)</div></div>
<div class="tab" style="left:269px;width:50px"><svg class="ic" style="left:5px;top:2px"><use href="#mon"/></svg><div class="t" style="left:27.1px;letter-spacing:0;transform:scaleX(0.9757);transform-origin:0 0">H1</div></div>
<div class="tab" style="left:318px;width:50px"><svg class="ic" style="left:5px;top:2px"><use href="#mon"/></svg><div class="t" style="left:27.1px;letter-spacing:0;transform:scaleX(1.011);transform-origin:0 0">H2</div></div>
<div class="tab" style="left:367px;width:73px"><svg class="ic" style="left:5px;top:2px"><use href="#mon"/></svg><div class="t" style="left:26.8px;letter-spacing:0;transform:scaleX(0.9092);transform-origin:0 0">CONS1</div></div>
<div class="tab" style="left:439px;width:49px"><svg class="ic" style="left:5px;top:2px"><use href="#mon"/></svg><div class="t" style="left:26.9px;letter-spacing:0;transform:scaleX(0.8971);transform-origin:0 0">P1</div></div>
<div class="tab" style="left:487px;width:65px"><svg class="ic" style="left:5px;top:2px"><use href="#mon"/></svg><div class="t" style="left:26.6px;letter-spacing:0;transform:scaleX(0.9401);transform-origin:0 0">P1 (2)</div></div>
<div class="tab" style="left:551px;width:65px"><svg class="ic" style="left:5px;top:2px"><use href="#mon"/></svg><div class="t" style="left:26.6px;letter-spacing:0;transform:scaleX(0.9432);transform-origin:0 0">P1 (3)</div></div>
<div class="tab" style="left:615px;width:48px"><svg class="ic" style="left:5px;top:2px"><use href="#mon"/></svg><div class="t" style="left:26.4px;letter-spacing:0;transform:scaleX(0.9416);transform-origin:0 0">P2</div></div>
<div class="tab sel" style="left:662px;width:51px"><svg class="ic" style="left:6px;top:3px"><use href="#mon"/></svg><div class="t" style="left:28.0px;letter-spacing:0;transform:scaleX(0.8749);transform-origin:0 0">P3</div></div>
<div class="tab" style="left:712px;width:48px"><svg class="ic" style="left:5px;top:2px"><use href="#mon"/></svg><div class="t" style="left:25.9px;letter-spacing:0;transform:scaleX(0.8971);transform-origin:0 0">P4</div></div>
<div class="tab" style="left:759px;width:65px"><svg class="ic" style="left:5px;top:2px"><use href="#mon"/></svg><div class="t" style="left:27.0px;letter-spacing:0;transform:scaleX(0.8837);transform-origin:0 0">SCOP</div></div>
<div class="tab" style="left:823px;width:136px"><svg class="ic" style="left:5px;top:2px"><use href="#mon"/></svg><div class="t" style="left:26.4px;letter-spacing:0;transform:scaleX(0.9433);transform-origin:0 0">grhic@10.208.41.52</div></div>
<div class="tab" style="left:958px;width:78px;background:linear-gradient(#dedede,#d3d3d3 45%,#c9c9c9 50%,#c1c1c1)"><svg class="ic" style="left:5px;top:2px"><use href="#mong"/></svg><div class="t" style="left:26.4px;letter-spacing:0;transform:scaleX(0.9483);transform-origin:0 0">CNAF57</div></div>
<div class="tab" style="left:1035px;width:123px"><svg class="ic" style="left:5px;top:1px"><use href="#monnew"/></svg><div class="t" style="left:26.9px;letter-spacing:0;transform:scaleX(0.9774);transform-origin:0 0">Nouvelle session</div></div>

<div class="a" style="left:0;top:124px;width:150px;height:21px;background:#fff"></div>
<div class="a" style="left:137px;top:125px;width:12px;height:19px;background:#f4f4f4"></div>
<div class="t" style="left:20.8px;top:126px;letter-spacing:0;transform:scaleX(0.9097);transform-origin:0 0">P: PUBLIC</div>
<div class="dd" style="left:140px;top:133px"></div>
<div class="grip" style="left:204px;top:127px"></div>
<div class="dd" style="left:232px;top:133px"></div>
<div class="dd g" style="left:267px;top:133px"></div>
<div class="grip" style="left:284px;top:127px"></div>
<div class="sep" style="left:382px;top:124px;height:21px"></div>
<div class="t g" style="left:23.0px;top:153px;letter-spacing:0;transform:scaleX(0.9666);transform-origin:0 0">Envoyer</div>
<div class="sep" style="left:95px;top:150px;height:21px"></div>
<div class="t g" style="left:120.8px;top:153px;letter-spacing:0;transform:scaleX(0.9815);transform-origin:0 0">Editer</div>
<div class="t g" style="left:224.0px;top:153px;letter-spacing:0;transform:scaleX(0.9756);transform-origin:0 0">Propriétés</div>
<div class="sep" style="left:284px;top:150px;height:21px"></div>
<div class="grip" style="left:339px;top:154px"></div>
<div class="hdr" style="left:0;top:174px;width:933px;height:21px"><div class="t" style="left:-2.2px;top:3px;color:#3b4650;letter-spacing:0;transform:scaleX(0.9619);transform-origin:0 0">P:\Projets\GRH\INFOCENTRE\Extraction IC - Sources\sources</div></div>
<div class="a" style="left:-2px;top:195px;width:935px;height:600px;background:#fff;border:1px solid #828790"></div>
<div class="lh" style="left:0;top:196px;width:932px">
<div class="t" style="left:0;letter-spacing:0;transform:scaleX(1.0935);transform-origin:0 0">Nom</div><div class="cs" style="left:588px"></div>
<div class="t" style="left:647.1px;letter-spacing:0;transform:scaleX(1.036);transform-origin:0 0">Taille</div><div class="cs" style="left:680px"></div>
<div class="t" style="left:686.4px;letter-spacing:0;transform:scaleX(1.0437);transform-origin:0 0">Type</div>
<div class="srt" style="left:801px;width:130px"></div><div class="t" style="left:807.3px;letter-spacing:0;transform:scaleX(1.023);transform-origin:0 0">Date de modification</div>
<svg class="a" style="left:874px;top:2px" width="7" height="4" viewBox="0 0 7 4"><path d="M0 0h7L3.500 4z" fill="#7fb0d4"/></svg>
</div>
<div class="vl" style="left:588px;top:220px;height:556px"></div>
<div class="vl" style="left:680px;top:220px;height:556px"></div>
<div class="vl" style="left:801px;top:220px;height:556px"></div>
<div class="sb" style="left:0;top:777px;width:932px"><div class="thumb" style="left:12px;width:881px"></div>
<svg class="a" style="left:1px;top:4px" width="5" height="7"><path d="M4.5 0v7L.5 3.5z" fill="#333"/></svg>
<svg class="a" style="left:920px;top:4px" width="5" height="7"><path d="M.5 0v7L4.5 3.5z" fill="#333"/></svg>
<svg class="a" style="left:447px;top:4px" width="8" height="7"><path d="M1 0v7M4 0v7M7 0v7" stroke="#555" stroke-width="1"/></svg></div>
<div class="t" style="left:-8.4px;top:799px;letter-spacing:0;transform:scaleX(0.9372);transform-origin:0 0">0 B de 0 B dans 0 de 0</div>

<div class="grip" style="left:942px;top:127px"></div>
<div class="a" style="left:947px;top:124px;width:113px;height:21px;background:#fff"></div>
<div class="a" style="left:1047px;top:125px;width:12px;height:19px;background:#f4f4f4"></div>
<div class="t" style="left:966.4px;top:126px;letter-spacing:0;transform:scaleX(1.0158);transform-origin:0 0">scripts</div>
<div class="dd" style="left:1051px;top:133px"></div>
<div class="grip" style="left:1114px;top:127px"></div>
<div class="dd" style="left:1143px;top:133px"></div>
<div class="dd g" style="left:1178px;top:133px"></div>
<div class="grip" style="left:1194px;top:127px"></div>
<div class="sep" style="left:1293px;top:124px;height:21px"></div>
<div class="t" style="left:1318.4px;top:126px;letter-spacing:0;transform:scaleX(0.9691);transform-origin:0 0">Rechercher des fichiers</div>
<div class="sep" style="left:1446px;top:124px;height:21px"></div>
<div class="a" style="left:1450px;top:123px;width:23px;height:23px;border:1px solid #3399ff;border-radius:2px;background:#e5f1fb"></div>
<div class="grip" style="left:942px;top:154px"></div>
<div class="t" style="left:968.6px;top:153px;letter-spacing:0;transform:scaleX(0.9836);transform-origin:0 0">Télécharger</div>
<div class="sep" style="left:1061px;top:150px;height:21px"></div>
<div class="t" style="left:1086.4px;top:153px;letter-spacing:0;transform:scaleX(0.9947);transform-origin:0 0">Editer</div>
<div class="t" style="left:1189.4px;top:153px;letter-spacing:0;transform:scaleX(0.9906);transform-origin:0 0">Propriétés</div>
<div class="sep" style="left:1250px;top:150px;height:21px"></div>
<div class="grip" style="left:1306px;top:154px"></div>
<div class="hdr" style="left:938px;top:174px;width:734px;height:21px"><div class="t" style="left:4.0px;top:3px;color:#3b4650;letter-spacing:0;transform:scaleX(1.0544);transform-origin:0 0">/svg/infocentre/scripts</div></div>
<div class="a" style="left:938px;top:195px;width:733px;height:160px;background:#fff;border:1px solid #828790"></div>
<div class="t" style="left:982.0px;top:199px;letter-spacing:0;transform:scaleX(1.0426);transform-origin:0 0">/ &lt;racine&gt;</div>
<div class="t" style="left:1001.6px;top:217px;letter-spacing:0;transform:scaleX(0.9836);transform-origin:0 0">svg</div>
<div class="t" style="left:1020.7px;top:235px;letter-spacing:0;transform:scaleX(1.0427);transform-origin:0 0">infocentre</div>
<div class="a" style="left:1017px;top:251px;width:61px;height:18px;border:1px solid #d9d9d9;border-radius:2px;background:linear-gradient(#f8f8f8,#e5e5e5)"></div>
<div class="t" style="left:1039.4px;top:253px;letter-spacing:0;transform:scaleX(1.0098);transform-origin:0 0">scripts</div>
<div class="a" style="left:938px;top:358px;width:733px;height:437px;background:#fff;border:1px solid #828790"></div>
<div class="lh" style="left:939px;top:359px;width:731px">
<div class="t" style="left:7.0px;letter-spacing:0;transform:scaleX(1.0727);transform-origin:0 0">Nom</div><div class="cs" style="left:508px"></div>
<div class="t" style="left:562.9px;letter-spacing:0;transform:scaleX(1.0627);transform-origin:0 0">Taille</div><div class="cs" style="left:597px"></div>
<div class="srt" style="left:597px;width:134px"></div><div class="t" style="left:602.6px;letter-spacing:0;transform:scaleX(1.0203);transform-origin:0 0">Date de modification</div>
<svg class="a" style="left:669px;top:2px" width="7" height="4" viewBox="0 0 7 4"><path d="M0 0h7L3.500 4z" fill="#7fb0d4"/></svg>
</div>
<div class="vl" style="left:1447px;top:383px;height:393px"></div>
<div class="vl" style="left:1536px;top:383px;height:393px"></div>
<div class="a" style="left:941px;top:383px;width:1px;height:394px;background:#bcd5f3"></div>
<div class="t fn" style="left:962px;top:386px">..</div><div class="t fd" style="left:1541.6px;top:386px;letter-spacing:0;transform:scaleX(0.9445);transform-origin:0 0">13/10/2016 09:34</div>
<div class="t fn" style="left:961.6px;top:405px;letter-spacing:0;transform:scaleX(0.9552);transform-origin:0 0">tri_int_HAINDEIJ.pl</div><div class="t fs" style="right:144px;top:405px;letter-spacing:0;transform:scaleX(0.9067);transform-origin:100% 0">4 KB</div><div class="t fd" style="left:1541.6px;top:405px;letter-spacing:0;transform:scaleX(0.9537);transform-origin:0 0">13/10/2016 11:06</div>
<div class="t fn" style="left:961.8px;top:424px;letter-spacing:0;transform:scaleX(0.9491);transform-origin:0 0">HAINDEIJ.txt.20161013-110612.out.log</div><div class="t fs" style="right:144px;top:424px;letter-spacing:0;transform:scaleX(0.9078);transform-origin:100% 0">35 KB</div><div class="t fd" style="left:1541.6px;top:424px;letter-spacing:0;transform:scaleX(0.9537);transform-origin:0 0">13/10/2016 11:06</div>
<div class="t fn" style="left:961.8px;top:443px;letter-spacing:0;transform:scaleX(0.9415);transform-origin:0 0">HAINDEIJ.txt.20161013-110612.out</div><div class="t fs" style="right:144px;top:443px;letter-spacing:0;transform:scaleX(0.908);transform-origin:100% 0">16 386 KB</div><div class="t fd" style="left:1541.6px;top:443px;letter-spacing:0;transform:scaleX(0.9537);transform-origin:0 0">13/10/2016 11:06</div>
<div class="t fn" style="left:961.8px;top:462px;letter-spacing:0;transform:scaleX(0.9451);transform-origin:0 0">HAINDEIJ.txt.20161012-161238.out.log</div><div class="t fs" style="right:144px;top:462px;letter-spacing:0;transform:scaleX(0.9078);transform-origin:100% 0">29 KB</div><div class="t fd" style="left:1541.6px;top:462px;letter-spacing:0;transform:scaleX(0.9445);transform-origin:0 0">12/10/2016 16:12</div>
<div class="t fn" style="left:961.8px;top:481px;letter-spacing:0;transform:scaleX(0.9371);transform-origin:0 0">HAINDEIJ.txt.20161012-161238.out</div><div class="t fs" style="right:144px;top:481px;letter-spacing:0;transform:scaleX(0.908);transform-origin:100% 0">16 386 KB</div><div class="t fd" style="left:1541.6px;top:481px;letter-spacing:0;transform:scaleX(0.9445);transform-origin:0 0">12/10/2016 16:12</div>
<div class="t fn" style="left:961.8px;top:500px;letter-spacing:0;transform:scaleX(0.9415);transform-origin:0 0">HAINDEIJ.txt.20161012-115930.out</div><div class="t fs" style="right:144px;top:500px;letter-spacing:0;transform:scaleX(0.908);transform-origin:100% 0">16 298 KB</div><div class="t fd" style="left:1541.6px;top:500px;letter-spacing:0;transform:scaleX(0.9445);transform-origin:0 0">12/10/2016 12:37</div>
<div class="t fn" style="left:961.8px;top:519px;letter-spacing:0;transform:scaleX(0.938);transform-origin:0 0">HAINDEIJ.txt.20161012-115930.log</div><div class="t fs" style="right:144px;top:519px;letter-spacing:0;transform:scaleX(0.9078);transform-origin:100% 0">81 KB</div><div class="t fd" style="left:1541.6px;top:519px;letter-spacing:0;transform:scaleX(0.9445);transform-origin:0 0">12/10/2016 12:37</div>
<div class="a" style="left:944px;top:536px;width:501px;height:18px;border:1px solid #d9d9d9;border-radius:2px;background:linear-gradient(#f8f8f8,#e5e5e5)"></div>
<div class="t fn" style="left:961.6px;top:538px;letter-spacing:0;transform:scaleX(0.9412);transform-origin:0 0">tri_int_HAINDEIJ.sh</div><div class="t fs" style="right:144px;top:538px;letter-spacing:0;transform:scaleX(0.9067);transform-origin:100% 0">6 KB</div><div class="t fd" style="left:1541.6px;top:538px;letter-spacing:0;transform:scaleX(0.9537);transform-origin:0 0">12/10/2016 11:58</div>
<div class="t fn" style="left:961.8px;top:557px;letter-spacing:0;transform:scaleX(0.9428);transform-origin:0 0">HAINDEIJ.txt.gz</div><div class="t fs" style="right:144px;top:557px;letter-spacing:0;transform:scaleX(0.9133);transform-origin:100% 0">1 490 KB</div><div class="t fd" style="left:1541.6px;top:557px;letter-spacing:0;transform:scaleX(0.9631);transform-origin:0 0">11/10/2016 11:00</div>
<div class="t fn" style="left:961.8px;top:576px;letter-spacing:0;transform:scaleX(0.9383);transform-origin:0 0">HAINDEIJ.txt</div><div class="t fs" style="right:144px;top:576px;letter-spacing:0;transform:scaleX(0.908);transform-origin:100% 0">16 387 KB</div><div class="t fd" style="left:1541.6px;top:576px;letter-spacing:0;transform:scaleX(0.9631);transform-origin:0 0">11/10/2016 11:00</div>

<div class="sb" style="left:939px;top:777px;width:731px"><div class="thumb" style="left:19px;width:571px"></div>
<svg class="a" style="left:6px;top:4px" width="5" height="7"><path d="M4.5 0v7L.5 3.5z" fill="#333"/></svg>
<svg class="a" style="left:720px;top:4px" width="5" height="7"><path d="M.5 0v7L4.5 3.5z" fill="#333"/></svg>
<svg class="a" style="left:300px;top:4px" width="8" height="7"><path d="M1 0v7M4 0v7M7 0v7" stroke="#555" stroke-width="1"/></svg></div>
<div class="t" style="left:938.0px;top:799px;letter-spacing:0;transform:scaleX(0.9208);transform-origin:0 0">5 289 B de 67 097 KB dans 1 de 10</div>

<div class="a" style="left:80px;top:818px;width:1589px;height:21px;background:#fff"></div>
<div class="a" style="left:1656px;top:819px;width:13px;height:19px;background:#f2f2f2"></div>
<div class="dd" style="left:1659px;top:827px"></div>
<div class="t" style="left:2.9px;top:821px;letter-spacing:0;transform:scaleX(1.0092);transform-origin:0 0">Commande $</div>
<div class="a" style="left:0;top:842px;width:1672px;height:1px;background:#a0a0a0"></div>
<div class="a" style="left:0;top:843px;width:1672px;height:1px;background:#fff"></div>
<div class="hdr" style="left:0;top:846px;width:1672px;height:21px"><div class="t" style="left:-3.1px;top:3px;color:#3b4650;letter-spacing:0;transform:scaleX(1.0048);transform-origin:0 0">Queue</div></div>
<div class="a" style="left:-3px;top:869px;width:20px;height:22px;border:1px solid #3399ff;border-radius:2px;background:#e5f1fb"></div>
<div class="sep" style="left:20px;top:870px;height:21px"></div>
<div class="sep" style="left:73px;top:870px;height:21px"></div>
<div class="sep" style="left:124px;top:870px;height:21px"></div>
<div class="dd g" style="left:152px;top:879px"></div>
<div class="a" style="left:-2px;top:893px;width:1674px;height:93px;background:#fff;border:1px solid #828790"></div>
<div class="lh" style="left:0;top:894px;width:1671px">
<div class="t" style="left:-0.1px;letter-spacing:0;transform:scaleX(1.0096);transform-origin:0 0">Opération</div><div class="cs" style="left:63px"></div>
<div class="t" style="left:69.4px;letter-spacing:0;transform:scaleX(0.9774);transform-origin:0 0">Source</div><div class="cs" style="left:530px"></div>
<div class="t" style="left:535.4px;letter-spacing:0;transform:scaleX(1.0111);transform-origin:0 0">Destination</div><div class="cs" style="left:1023px"></div>
<div class="t" style="right:572px;letter-spacing:0;transform:scaleX(0.9604);transform-origin:100% 0">Transférés</div><div class="cs" style="left:1103px"></div>
<div class="t" style="right:492px;letter-spacing:0;transform:scaleX(1.0004);transform-origin:100% 0">Durée</div><div class="cs" style="left:1183px"></div>
<div class="t" style="right:412px;letter-spacing:0;transform:scaleX(0.962);transform-origin:100% 0">Vitesse</div><div class="cs" style="left:1263px"></div>
<div class="t" style="left:1282.4px;letter-spacing:0;transform:scaleX(0.9868);transform-origin:0 0">Progression</div><div class="cs" style="left:1364px"></div>
</div>
<div class="a" style="left:1449px;top:988px;width:1px;height:17px;background:#dadada;box-shadow:3px 0 0 #dedede,1px 0 0 #f8f8f8"></div>
<div class="a" style="left:1484px;top:988px;width:1px;height:17px;background:#dadada;box-shadow:3px 0 0 #dedede,1px 0 0 #f8f8f8"></div>
<div class="a" style="left:1554px;top:988px;width:1px;height:17px;background:#dadada;box-shadow:3px 0 0 #dedede,1px 0 0 #f8f8f8"></div>
<div class="a" style="left:1589px;top:988px;width:1px;height:17px;background:#dadada;box-shadow:3px 0 0 #dedede,1px 0 0 #f8f8f8"></div>
<div class="t" style="left:1509.5px;top:990px;letter-spacing:0;transform:scaleX(0.8941);transform-origin:0 0">SCP</div>
<div class="t" style="left:1603.0px;top:990px;letter-spacing:0;transform:scaleX(0.9174);transform-origin:0 0">3, 20:23:39</div>

<div class="a" id="dlg" style="left:392px;top:327px;width:478px;height:274px;border:1px solid #2b2f36;border-radius:7px;background:linear-gradient(90deg,rgba(255,255,255,0) 0,rgba(255,255,255,0) 40%,rgba(255,255,255,.32) 100%),linear-gradient(#d6e7f8,#c4dcf5 28px,#b4d3f2 45%,#b3d4f5 70%,#b8d8f8);box-shadow:0 0 0 1px rgba(255,255,255,.55) inset,0 3px 14px 3px rgba(0,0,0,.55),0 0 3px 1px rgba(0,0,0,.5)">
<div class="t" style="left:6.7px;top:6px;letter-spacing:0;transform:scaleX(0.9955);transform-origin:0 0">Erreur</div>
<div class="a" style="left:394px;top:-1px;width:29px;height:20px;border:1px solid #46505c;border-radius:0 0 0 4px;background:linear-gradient(#e8eff6,#cbd6e2 48%,#b2bfcf 52%,#c8d4e0)"></div>
<div class="a" style="left:422px;top:-1px;width:48px;height:20px;border:1px solid #46505c;border-radius:0 0 4px 0;background:linear-gradient(#e9a99b,#d9806d 48%,#c5412b 52%,#d36c4f)"></div>
<svg class="a" style="left:403px;top:2px" width="12" height="14" viewBox="0 0 12 14"><path d="M3.200 4.300c0-1.600 1.200-2.400 2.800-2.400s2.800.8 2.800 2.200c0 1.800-2.500 2-2.500 3.900" fill="none" stroke="#3a4250" stroke-width="3.300" stroke-linecap="round"/><circle cx="6.300" cy="11.300" r="1.900" fill="#3a4250"/><path d="M3.200 4.300c0-1.600 1.200-2.400 2.800-2.400s2.800.8 2.800 2.200c0 1.800-2.500 2-2.500 3.900" fill="none" stroke="#fff" stroke-width="1.500" stroke-linecap="round"/><circle cx="6.300" cy="11.300" r="1" fill="#fff"/></svg>
<svg class="a" style="left:439px;top:3px" width="14" height="12" viewBox="0 0 14 12"><path d="M1 1.300h3.800L7 3.800l2.200-2.500H13L9 6l4 4.700H9.200L7 8.200l-2.200 2.500H1L5 6z" fill="#fff" stroke="#5d2a24" stroke-width="1.200" stroke-linejoin="round"/></svg>
<div class="a" style="left:6px;top:28px;width:465px;height:238px;border:1px solid #5d6a78;background:#fff"></div>
<div class="a" style="left:7px;top:224px;width:463px;height:41px;background:#f0f0f0"></div>
<svg class="a" style="left:19px;top:44px" width="32" height="32"><use href="#err"/></svg>
<div class="t" style="left:64.7px;top:46px;font-size:16px;line-height:20px;height:20px;color:#003399;letter-spacing:0;transform:scaleX(0.9692);transform-origin:0 0">Accès mémoire invalide.</div>
<div class="t" style="left:64.7px;top:80px;letter-spacing:0;transform:scaleX(0.9888);transform-origin:0 0">Aidez-nous à améliorer WinSCP en rapportant l'erreur sur le forum de</div>
<div class="t" style="left:64.7px;top:95px;letter-spacing:0;transform:scaleX(0.9823);transform-origin:0 0">support de WinSCP.</div>
<div class="a" style="left:65px;top:125px;width:392px;height:84px;border:1px solid #e3e9ef;border-top-color:#abadb3;background:#fff"></div>
<div class="a" style="left:439px;top:127px;width:17px;height:81px;background:#f0f0f0"></div>
<div class="a" style="left:440px;top:146px;width:14px;height:18px;border:1px solid #979797;border-radius:2px;background:linear-gradient(90deg,#f2f2f2,#e9e9e9 45%,#d8d8d8 50%,#cdcdcd)"></div>
<svg class="a" style="left:444px;top:151px" width="7" height="8"><path d="M0 1h7M0 4h7M0 7h7" stroke="#555" stroke-width="1"/></svg>
<svg class="a" style="left:444px;top:133px" width="7" height="5"><path d="M0 4.5h7L3.5 .5z" fill="#333"/></svg>
<svg class="a" style="left:444px;top:197px" width="7" height="5"><path d="M0 .5h7L3.5 4.5z" fill="#333"/></svg>
<div class="t st" style="left:71.0px;top:128px;letter-spacing:0;transform:scaleX(0.9694);transform-origin:0 0">Trace de la pile :</div>
<div class="t st" style="left:71.1px;top:143px;letter-spacing:0;transform:scaleX(0.8759);transform-origin:0 0">(003EEC07)</div>
<div class="t st" style="left:71.0px;top:158px;letter-spacing:0;transform:scaleX(0.9754);transform-origin:0 0">(00062496) ntdll.dll</div>
<div class="t st" style="left:71.0px;top:173px;letter-spacing:0;transform:scaleX(0.957);transform-origin:0 0">(0000F13E) ntdll.dll.KiUserExceptionDispatcher</div>
<div class="t st" style="left:71.1px;top:188px;letter-spacing:0;transform:scaleX(0.8671);transform-origin:0 0">(003ECE5F)</div>
<div class="btn" style="left:221px;top:233px;width:73px">OK</div>
<div class="btn" style="left:302px;top:233px;width:73px">Aide</div>
<div class="btn" style="left:383px;top:233px;width:73px;border-color:#3c7fb1;box-shadow:inset 0 0 0 1px #48d8fb;background:linear-gradient(#f0f8fd,#e4f2fb 48%,#d4eaf8 52%,#cbe5f5)">Reporter</div>
<div class="a" style="left:386px;top:236px;width:67px;height:17px;border:1px dotted #222"></div>
</div>

<!--ICONS-->
<svg class="ic" style="left:3px;top:50px;width:16px;height:16px"><use href="#cmp"/></svg>
<svg class="ic" style="left:26px;top:50px;width:16px;height:16px"><use href="#syncf"/></svg>
<svg class="ic" style="left:49px;top:50px;width:16px;height:16px"><use href="#fsync"/></svg>
<svg class="ic" style="left:150px;top:50px;width:16px;height:16px"><use href="#con"/></svg>
<svg class="ic" style="left:173px;top:50px;width:16px;height:16px"><use href="#putty"/></svg>
<svg class="ic" style="left:202px;top:50px;width:16px;height:16px"><use href="#sbrowse"/></svg>
<svg class="ic" style="left:235px;top:50px;width:16px;height:16px"><use href="#gear"/></svg>
<svg class="ic" style="left:265px;top:50px;width:16px;height:16px"><use href="#qlistg"/></svg>
<svg class="ic" style="left:287px;top:50px;width:16px;height:16px"><use href="#docs3"/></svg>
<svg class="ic" style="left:644px;top:50px;width:16px;height:16px"><use href="#globe"/></svg>
<svg class="ic" style="left:492px;top:77px;width:16px;height:16px"><use href="#conmon"/></svg>
<svg class="ic" style="left:521px;top:77px;width:16px;height:16px"><use href="#gear"/></svg>
<svg class="ic" style="left:3px;top:126px;width:16px;height:16px"><use href="#drive"/></svg>
<svg class="ic" style="left:154px;top:126px;width:16px;height:16px"><use href="#fopen"/></svg>
<svg class="ic" style="left:177px;top:126px;width:16px;height:16px"><use href="#filt"/></svg>
<svg class="ic" style="left:210px;top:126px;width:16px;height:16px"><use href="#back"/></svg>
<svg class="ic" style="left:245px;top:126px;width:16px;height:16px"><use href="#fwdg"/></svg>
<svg class="ic" style="left:290px;top:126px;width:16px;height:16px"><use href="#fup"/></svg>
<svg class="ic" style="left:313px;top:126px;width:16px;height:16px"><use href="#froot"/></svg>
<svg class="ic" style="left:336px;top:126px;width:16px;height:16px"><use href="#home"/></svg>
<svg class="ic" style="left:360px;top:126px;width:16px;height:16px"><use href="#refrg"/></svg>
<svg class="ic" style="left:388px;top:126px;width:16px;height:16px"><use href="#tree"/></svg>
<svg class="ic" style="left:1065px;top:126px;width:16px;height:16px"><use href="#fopen"/></svg>
<svg class="ic" style="left:1088px;top:126px;width:16px;height:16px"><use href="#filt"/></svg>
<svg class="ic" style="left:1121px;top:126px;width:16px;height:16px"><use href="#back"/></svg>
<svg class="ic" style="left:1156px;top:126px;width:16px;height:16px"><use href="#fwdg"/></svg>
<svg class="ic" style="left:1200px;top:126px;width:16px;height:16px"><use href="#fup"/></svg>
<svg class="ic" style="left:1223px;top:126px;width:16px;height:16px"><use href="#froot2"/></svg>
<svg class="ic" style="left:1247px;top:126px;width:16px;height:16px"><use href="#home"/></svg>
<svg class="ic" style="left:1270px;top:126px;width:16px;height:16px"><use href="#refr"/></svg>
<svg class="ic" style="left:1453px;top:126px;width:16px;height:16px"><use href="#tree"/></svg>
<svg class="ic" style="left:3px;top:153px;width:16px;height:16px"><use href="#uplg"/></svg>
<svg class="ic" style="left:72px;top:153px;width:16px;height:16px"><use href="#uplg"/></svg>
<svg class="ic" style="left:101px;top:153px;width:16px;height:16px"><use href="#editg"/></svg>
<svg class="ic" style="left:159px;top:153px;width:16px;height:16px"><use href="#xg"/></svg>
<svg class="ic" style="left:181px;top:153px;width:16px;height:16px"><use href="#reng"/></svg>
<svg class="ic" style="left:204px;top:153px;width:16px;height:16px"><use href="#propg"/></svg>
<svg class="ic" style="left:290px;top:153px;width:16px;height:16px"><use href="#fnew"/></svg>
<svg class="ic" style="left:313px;top:153px;width:16px;height:16px"><use href="#shcut"/></svg>
<svg class="ic" style="left:347px;top:154px;width:14px;height:14px"><use href="#plusg"/></svg>
<svg class="ic" style="left:370px;top:154px;width:14px;height:14px"><use href="#minusg"/></svg>
<svg class="ic" style="left:393px;top:154px;width:14px;height:14px"><use href="#fboxg"/></svg>
<svg class="ic" style="left:949px;top:153px;width:16px;height:16px"><use href="#dl"/></svg>
<svg class="ic" style="left:1038px;top:153px;width:16px;height:16px"><use href="#dl"/></svg>
<svg class="ic" style="left:1067px;top:153px;width:16px;height:16px"><use href="#edit"/></svg>
<svg class="ic" style="left:1124px;top:153px;width:16px;height:16px"><use href="#xr"/></svg>
<svg class="ic" style="left:1147px;top:153px;width:16px;height:16px"><use href="#ren"/></svg>
<svg class="ic" style="left:1170px;top:153px;width:16px;height:16px"><use href="#prop"/></svg>
<svg class="ic" style="left:1256px;top:153px;width:16px;height:16px"><use href="#fnew"/></svg>
<svg class="ic" style="left:1279px;top:153px;width:16px;height:16px"><use href="#shcut"/></svg>
<svg class="ic" style="left:1313px;top:154px;width:14px;height:14px"><use href="#plus"/></svg>
<svg class="ic" style="left:1336px;top:154px;width:14px;height:14px"><use href="#minus"/></svg>
<svg class="ic" style="left:1359px;top:154px;width:14px;height:14px"><use href="#fbox"/></svg>
<svg class="ic" style="left:1299px;top:126px;width:16px;height:16px"><use href="#bino"/></svg>
<svg class="ic" style="left:948px;top:126px;width:16px;height:16px"><use href="#w7"/></svg>
<svg class="ic" style="left:962px;top:198px;width:16px;height:16px"><use href="#w7"/></svg>
<svg class="ic" style="left:981px;top:216px;width:16px;height:16px"><use href="#w7"/></svg>
<svg class="ic" style="left:1000px;top:234px;width:16px;height:16px"><use href="#w7"/></svg>
<svg class="ic" style="left:1018px;top:252px;width:16px;height:16px"><use href="#w7"/></svg>
<svg class="a" style="left:949px;top:204px" width="7" height="7"><path d="M6.500 .8v5.700H.8z" fill="#595959" stroke="#262626" stroke-width=".8"/></svg>
<svg class="a" style="left:968px;top:222px" width="7" height="7"><path d="M6.500 .8v5.700H.8z" fill="#595959" stroke="#262626" stroke-width=".8"/></svg>
<svg class="a" style="left:987px;top:240px" width="7" height="7"><path d="M6.500 .8v5.700H.8z" fill="#595959" stroke="#262626" stroke-width=".8"/></svg>
<div class="a" style="left:958px;top:207px;width:4px;height:1px;background:repeating-linear-gradient(90deg,#9a9a9a 0,#9a9a9a 1px,transparent 1px,transparent 2px)"></div>
<div class="a" style="left:977px;top:225px;width:4px;height:1px;background:repeating-linear-gradient(90deg,#9a9a9a 0,#9a9a9a 1px,transparent 1px,transparent 2px)"></div>
<div class="a" style="left:996px;top:243px;width:4px;height:1px;background:repeating-linear-gradient(90deg,#9a9a9a 0,#9a9a9a 1px,transparent 1px,transparent 2px)"></div>
<div class="a" style="left:1008px;top:251px;width:1px;height:11px;background:repeating-linear-gradient(#9a9a9a 0,#9a9a9a 1px,transparent 1px,transparent 2px)"></div>
<div class="a" style="left:1008px;top:261px;width:10px;height:1px;background:repeating-linear-gradient(90deg,#9a9a9a 0,#9a9a9a 1px,transparent 1px,transparent 2px)"></div>
<svg class="ic" style="left:944px;top:385px;width:16px;height:16px"><use href="#w7up"/></svg>
<svg class="ic" style="left:944px;top:404px;width:16px;height:16px"><use href="#doc"/></svg>
<svg class="ic" style="left:944px;top:423px;width:16px;height:16px"><use href="#scr2"/></svg>
<svg class="ic" style="left:944px;top:442px;width:16px;height:16px"><use href="#blank"/></svg>
<svg class="ic" style="left:944px;top:461px;width:16px;height:16px"><use href="#scr2"/></svg>
<svg class="ic" style="left:944px;top:480px;width:16px;height:16px"><use href="#blank"/></svg>
<svg class="ic" style="left:944px;top:499px;width:16px;height:16px"><use href="#blank"/></svg>
<svg class="ic" style="left:944px;top:518px;width:16px;height:16px"><use href="#scr2"/></svg>
<svg class="ic" style="left:944px;top:537px;width:16px;height:16px"><use href="#scr2"/></svg>
<svg class="ic" style="left:944px;top:556px;width:16px;height:16px"><use href="#gz"/></svg>
<svg class="ic" style="left:944px;top:575px;width:16px;height:16px"><use href="#doc"/></svg>
<svg class="ic" style="left:-3px;top:872px;width:16px;height:16px"><use href="#qgo"/></svg>
<svg class="ic" style="left:27px;top:872px;width:16px;height:16px"><use href="#playg"/></svg>
<svg class="ic" style="left:49px;top:872px;width:16px;height:16px"><use href="#xg"/></svg>
<svg class="ic" style="left:78px;top:872px;width:16px;height:16px"><use href="#upg"/></svg>
<svg class="ic" style="left:101px;top:872px;width:16px;height:16px"><use href="#downg"/></svg>
<svg class="ic" style="left:130px;top:872px;width:16px;height:16px"><use href="#docsg"/></svg>
<svg class="ic" style="left:165px;top:872px;width:16px;height:16px"><use href="#gear"/></svg>
<svg class="ic" style="left:1460px;top:990px;width:16px;height:16px"><use href="#lock"/></svg>
<svg class="ic" style="left:1564px;top:989px;width:18px;height:16px"><use href="#stico"/></svg>

<svg class="a" style="left:1167px;top:385px;z-index:50" width="14" height="22" viewBox="0 0 14 22"><path d="M1.500 1.200v16l3.700-3.500 2.500 5.900 2.200-1-2.500-5.800h5.200z" fill="#fff" stroke="#0c1020" stroke-width="1.100" stroke-linejoin="round"/></svg>

</body></html>
